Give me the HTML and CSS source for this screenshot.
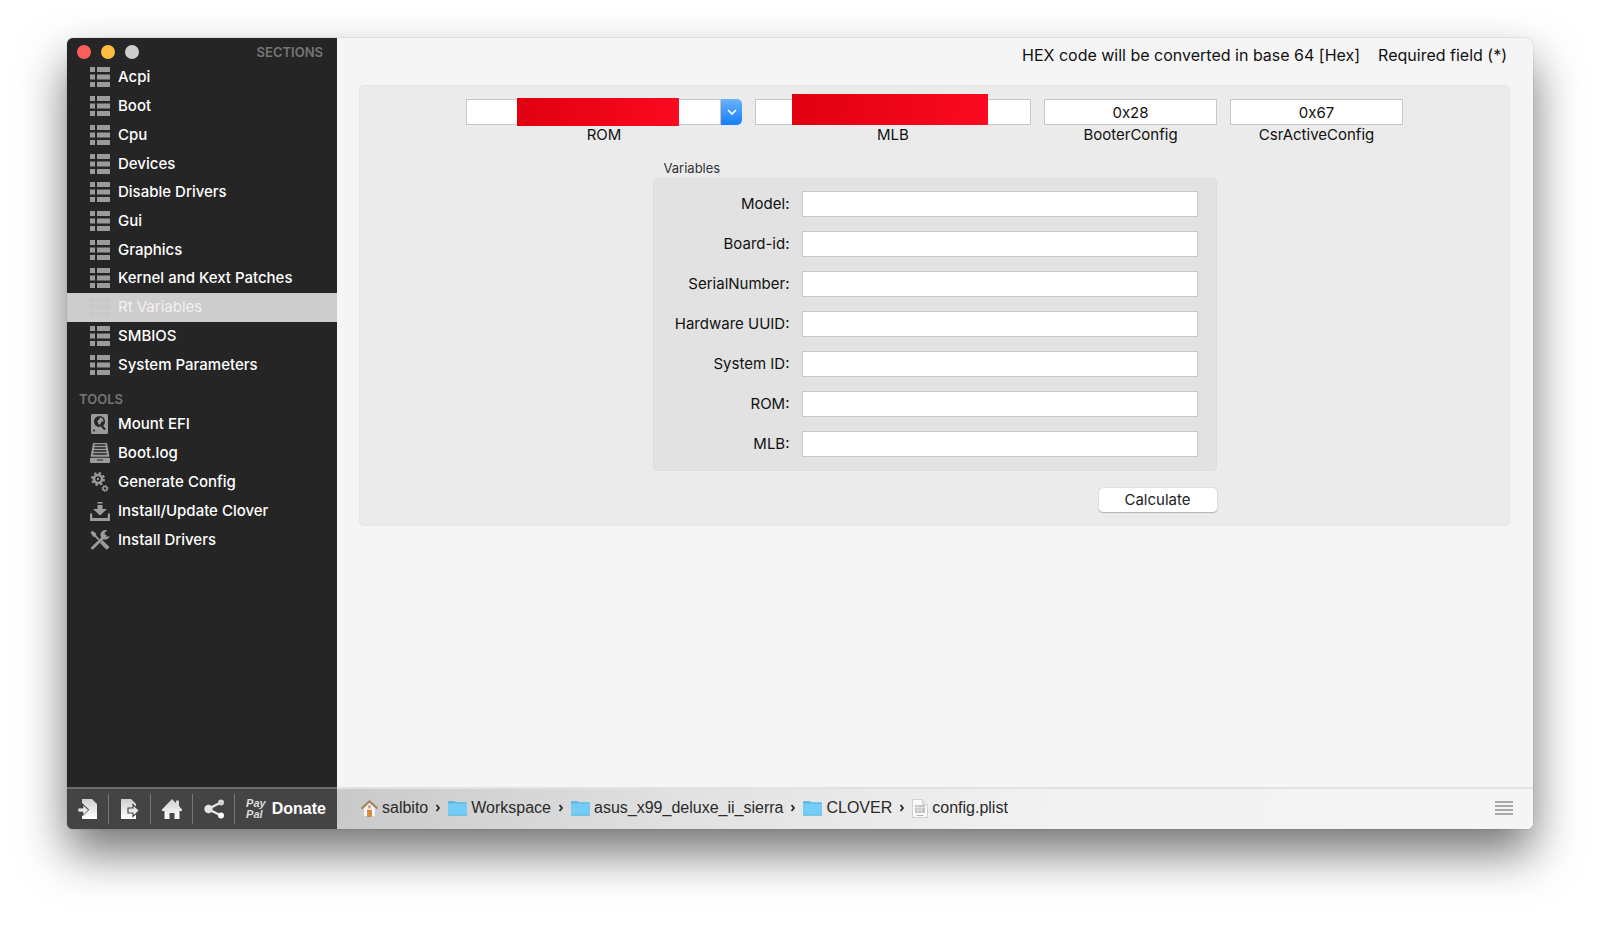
FILE: index.html
```
<!DOCTYPE html>
<html lang="en">
<head>
  <meta charset="UTF-8" />
  <meta name="viewport" content="width=device-width, initial-scale=1.0"/>
  <title>config.plist</title>
  <link rel="stylesheet" href="styles.css">
</head>
<body>

  <!-- Shared icons -->
  <svg class="sprite" aria-hidden="true">
    <symbol id="list" viewBox="0 0 20 20">
      <path d="M0 0h5v5H0zM7 0h13v5H7zM0 7.5h5v5H0zM7 7.5h13v5H7zM0 15h5v5H0zM7 15h13v5H7z"/>
    </symbol>
    <symbol id="folder" viewBox="0 0 20 16">
      <path d="M0 2Q0 .5 1.500 .5H6.500L8.500 2H19Q20 2 20 3V8H0z" fill="#5fb9e3"/>
      <path d="M0 3.500h20v11.500q0 .5-.5.5h-19q-.5 0-.5-.5z" fill="#74cdf6"/>
      <path d="M0 15.500h20" stroke="#58b2dc"/>
    </symbol>
    <symbol id="chevron" viewBox="0 0 6 8">
      <path d="M1.500 1l2.500 3-2.500 3" fill="none" stroke="#222" stroke-width="1.700"/>
    </symbol>
    <linearGradient id="silver" x1="0" y1="0" x2="0" y2="1">
      <stop offset="0" stop-color="#cfcfcf"/>
      <stop offset="1" stop-color="#fff"/>
    </linearGradient>
  </svg>

  <div class="window">

    <!-- Sidebar -->
    <aside class="sidebar">
      <header class="titlebar">
        <button class="light light--close" aria-label="Close"></button>
        <button class="light light--min" aria-label="Minimize"></button>
        <button class="light light--zoom" aria-label="Zoom"></button>
        <h2 class="heading heading--sections">SECTIONS</h2>
      </header>

      <nav class="menu menu--sections" aria-label="Sections">
        <a href="#acpi"><svg class="menu__icon"><use href="#list"/></svg>Acpi</a>
        <a href="#boot"><svg class="menu__icon"><use href="#list"/></svg>Boot</a>
        <a href="#cpu"><svg class="menu__icon"><use href="#list"/></svg>Cpu</a>
        <a href="#devices"><svg class="menu__icon"><use href="#list"/></svg>Devices</a>
        <a href="#drivers"><svg class="menu__icon"><use href="#list"/></svg>Disable Drivers</a>
        <a href="#gui"><svg class="menu__icon"><use href="#list"/></svg>Gui</a>
        <a href="#graphics"><svg class="menu__icon"><use href="#list"/></svg>Graphics</a>
        <a href="#kernel"><svg class="menu__icon"><use href="#list"/></svg>Kernel and Kext Patches</a>
        <a href="#rt" class="active"><svg class="menu__icon"><use href="#list"/></svg>Rt Variables</a>
        <a href="#smbios"><svg class="menu__icon"><use href="#list"/></svg>SMBIOS</a>
        <a href="#system"><svg class="menu__icon"><use href="#list"/></svg>System Parameters</a>
      </nav>

      <h2 class="heading heading--tools">TOOLS</h2>

      <nav class="menu menu--tools" aria-label="Tools">
        <a href="#mount">
          <svg class="menu__icon" viewBox="0 0 20 20">
            <rect x="1" width="17" height="20" rx="1.500"/>
            <circle cx="9.500" cy="7.500" r="5.500" fill="#252525"/>
            <path d="M9.500 7.500V3.500a4 4 0 0 1 4 4zM8 9.500l2-1 5.500 6.500-1.500 1.500z"/>
            <path d="M10 10l5 5.500" stroke="#252525" stroke-width="2"/>
            <circle cx="9.500" cy="7.500" r="2"/>
            <circle cx="4" cy="16.500" r="1" fill="#252525"/>
          </svg>Mount EFI</a>
        <a href="#log">
          <svg class="menu__icon" viewBox="0 0 20 20">
            <path d="M3 0h14l2.500 14H.5z"/>
            <path d="M4.500 2h11M4.200 5h11.600M3.700 8h12.600M3.200 11h13.600" stroke="#252525" stroke-width="1.500"/>
            <path d="M.3 14.200h19.400" stroke="#252525" stroke-width=".8"/>
            <rect y="14.700" width="20" height="5.300" rx="1"/>
            <path d="M7 17h6" stroke="#252525"/>
          </svg>Boot.log</a>
        <a href="#generate">
          <svg class="menu__icon" viewBox="0 0 20 20">
            <circle cx="8" cy="7" r="4" fill="none" stroke="#9b9b9b" stroke-width="2.500"/>
            <circle cx="8" cy="7" r="6" fill="none" stroke="#9b9b9b" stroke-width="2" stroke-dasharray="2.400 2.310"/>
            <circle cx="8" cy="7" r="1.200"/>
            <circle cx="15" cy="16.500" r="2" fill="none" stroke="#9b9b9b" stroke-width="1.500"/>
            <circle cx="15" cy="16.500" r="3" fill="none" stroke="#9b9b9b" stroke-dasharray="1.200 1.156"/>
          </svg>Generate Config</a>
        <a href="#install">
          <svg class="menu__icon" viewBox="0 0 20 20">
            <path d="M7.500 1h5v1.500h-5zM7.500 4h5v4H17l-7 6.500L3 8h4.500zM0 12.500h2.200V17h15.600v-4.500H20V20H0z"/>
          </svg>Install/Update Clover</a>
        <a href="#install-drivers">
          <svg class="menu__icon" viewBox="0 0 20 20">
            <path d="M.5 2.500L2.500.8l3.500 2.700.4 2.200L9.500 9 8.200 10.200 5 7 3 6.500zM10 13l2.500-2.800 5.800 5.500a2 2 0 0 1-2.800 3z"/>
            <path d="M2.500 18L15 5.800" stroke="#9b9b9b" stroke-width="3" stroke-linecap="round"/>
            <path d="M17.500.7a4.700 4.700 0 1 0 2.200 5.200l-3 .8-2.300-1.800.6-2.900z"/>
          </svg>Install Drivers</a>
      </nav>

      <footer class="toolbar">
        <button class="toolbar__button" aria-label="Import">
          <svg viewBox="0 0 20 20">
            <path d="M4 0h10l5 5v15H4v-3l7-6.500L4 4z" fill="url(#silver)"/>
            <path d="M0 9h5V5.500l5.500 5.500L5 16.500V13H0z" fill="url(#silver)" stroke="#444" stroke-width=".8"/>
          </svg>
        </button>
        <button class="toolbar__button" aria-label="Export">
          <svg viewBox="0 0 20 20">
            <path d="M1 0h10l5 5v15H1z" fill="url(#silver)"/>
            <path d="M8 9h5V5.500l6.500 6-6.500 6V14H8z" fill="url(#silver)" stroke="#444" stroke-width="1.200"/>
          </svg>
        </button>
        <button class="toolbar__button" aria-label="Home">
          <svg viewBox="0 0 20 20">
            <path d="M10 0l4 4V1.500h3V7l3 3.500V12h-2.500v8h-5v-6h-5v6h-5v-8H0v-1.500z" fill="url(#silver)"/>
          </svg>
        </button>
        <button class="toolbar__button" aria-label="Share">
          <svg viewBox="0 0 20 20">
            <path d="M17 3.500L4 10l13 6.500" fill="none" stroke="#e4e4e4" stroke-width="2.500"/>
            <circle cx="4.500" cy="10" r="4.200" fill="#e4e4e4"/>
            <circle cx="17" cy="3.500" r="3" fill="#d4d4d4"/>
            <circle cx="17" cy="16.500" r="3" fill="#fff"/>
          </svg>
        </button>
        <button class="toolbar__donate">
          <span class="paypal">Pay<br>Pal</span>
          <span>Donate</span>
        </button>
      </footer>
    </aside>

    <!-- Main Content -->
    <main class="main">
      <div class="notes">
        <span>HEX code will be converted in base 64 [Hex]</span>
        <span>Required field (*)</span>
      </div>

      <form class="panel">
        <div class="settings">
          <div class="setting setting--wide">
            <div class="combo">
              <input type="text" id="rom" class="field">
              <button type="button" class="combo__button" aria-label="Show values">
                <svg viewBox="0 0 10 6"><path d="M1 1l4 4 4-4" fill="none" stroke="#fff" stroke-width="1.600"/></svg>
              </button>
              <span class="redacted redacted--rom"></span>
            </div>
            <label for="rom">ROM</label>
          </div>
          <div class="setting setting--wide">
            <div class="combo">
              <input type="text" id="mlb" class="field">
              <span class="redacted redacted--mlb"></span>
            </div>
            <label for="mlb">MLB</label>
          </div>
          <div class="setting">
            <input type="text" id="booter" class="field" value="0x28">
            <label for="booter">BooterConfig</label>
          </div>
          <div class="setting">
            <input type="text" id="csr" class="field" value="0x67">
            <label for="csr">CsrActiveConfig</label>
          </div>
        </div>

        <div class="variables">
          <h3 class="variables__title">Variables</h3>
          <div class="variables__box">
            <label for="v-model">Model:</label>
            <input type="text" id="v-model" class="field">
            <label for="v-board">Board-id:</label>
            <input type="text" id="v-board" class="field">
            <label for="v-serial">SerialNumber:</label>
            <input type="text" id="v-serial" class="field">
            <label for="v-uuid">Hardware UUID:</label>
            <input type="text" id="v-uuid" class="field">
            <label for="v-system">System ID:</label>
            <input type="text" id="v-system" class="field">
            <label for="v-rom">ROM:</label>
            <input type="text" id="v-rom" class="field">
            <label for="v-mlb">MLB:</label>
            <input type="text" id="v-mlb" class="field">
          </div>
          <button type="button" class="calculate">Calculate</button>
        </div>
      </form>

      <footer class="pathbar">
        <nav class="path" aria-label="File path">
          <a href="#salbito">
            <svg class="path__home" viewBox="0 0 16 16">
              <path d="M2.500 7.500L8 2.500l5.500 5V15.500h-11z" fill="#f7f7f7" stroke="#bbb" stroke-width=".5"/>
              <path d="M.5 8L8 1.200 15.500 8" fill="none" stroke="#a77c55" stroke-width="1.700"/>
              <rect x="6.500" y="5" width="3" height="3" fill="#c9a798"/>
              <rect x="6.200" y="9.500" width="3.600" height="6" fill="#e8862d" stroke="#a9683a" stroke-width=".5"/>
            </svg>salbito</a>
          <svg class="path__chevron"><use href="#chevron"/></svg>
          <a href="#workspace"><svg class="path__folder"><use href="#folder"/></svg>Workspace</a>
          <svg class="path__chevron"><use href="#chevron"/></svg>
          <a href="#asus"><svg class="path__folder"><use href="#folder"/></svg>asus_x99_deluxe_ii_sierra</a>
          <svg class="path__chevron"><use href="#chevron"/></svg>
          <a href="#clover"><svg class="path__folder"><use href="#folder"/></svg>CLOVER</a>
          <svg class="path__chevron"><use href="#chevron"/></svg>
          <a href="#config">
            <svg class="path__file" viewBox="0 0 16 19">
              <path d="M.5.5h10l5 5v13H.5z" fill="#fafafa" stroke="#d0d0d0"/>
              <path d="M10.500.5v5h5" fill="#e8e8e8" stroke="#d0d0d0"/>
              <rect x="3" y="6" width="10" height="8" fill="#c4c4c4"/>
              <path d="M3 8.500h10M3 11h6M6 6v8M9.500 8v6" stroke="#eee" stroke-width=".7"/>
              <path d="M4.500 16.500h7" stroke="#b5b5b5"/>
            </svg>config.plist</a>
        </nav>
        <button class="pathbar__menu" aria-label="Menu">
          <svg viewBox="0 0 18 14"><path d="M0 1h18M0 5h18M0 9h18M0 13h18" stroke="#8e8e8e" stroke-width="1.300"/></svg>
        </button>
      </footer>
    </main>
  </div>

</body>
</html>
```
FILE: styles.css
```
* {
  margin: 0;
  padding: 0;
  box-sizing: border-box;
}

body {
  min-height: 100vh;
  display: flex;
  padding: 38px 67px 96px;
  background: #fff;
  color: #111;
  font-family: Inter, Roboto, sans-serif;
  font-size: 15px;
  line-height: 20px;
}

a {
  color: inherit;
  text-decoration: none;
}

button {
  border: none;
  background: none;
  font: inherit;
  color: inherit;
}

.sprite {
  position: absolute;
  width: 0;
  height: 0;
}

.window {
  flex: 1;
  display: flex;
  border-radius: 6px;
  overflow: hidden;
  box-shadow: 0 0 1px rgba(0, 0, 0, 0.5), 0 24px 48px rgba(0, 0, 0, 0.55);
}

/* Sidebar */
.sidebar {
  flex: 0 0 270px;
  display: flex;
  flex-direction: column;
  background: #252525;
  color: #fff;
}

.titlebar {
  display: flex;
  align-items: center;
  gap: 10px;
  height: 25px;
  padding: 2px 14px 0 10px;
}

.light {
  width: 14px;
  height: 14px;
  border-radius: 50%;
}

.light--close { background: #fc605b; }
.light--min { background: #fdbc40; }
.light--zoom { background: #cdcdcd; }

.heading {
  color: #757575;
  font-size: 13px;
  font-weight: 600;
}

.heading--sections {
  margin-left: auto;
}

.heading--tools {
  padding: 10px 12px 1px;
}

.menu {
  display: grid;
  grid-auto-rows: 1fr;
  font-weight: 500;
}

.menu--sections { min-height: 316px; }
.menu--tools { min-height: 144px; }

.menu a {
  display: flex;
  align-items: center;
  gap: 8px;
  padding-left: 23px;
}

.menu__icon {
  width: 20px;
  height: 20px;
  fill: #9b9b9b;
}

.menu .active {
  background: #cdcdcd;
  color: #f4eff4;
  font-weight: 400;
}

.active .menu__icon {
  fill: #c9c9c9;
}

.toolbar {
  display: flex;
  align-items: center;
  height: 42px;
  margin-top: auto;
  border-top: 2px solid #6c6c6c;
  background: #444;
}

.toolbar__button {
  width: 42px;
  height: 30px;
  border-right: 1px solid #777;
  display: flex;
  align-items: center;
  justify-content: center;
}

.toolbar__button svg {
  width: 20px;
  height: 20px;
}

.toolbar__donate {
  flex: 1;
  display: flex;
  align-items: center;
  justify-content: center;
  gap: 6px;
  font-family: "Liberation Sans", Arial, sans-serif;
  font-size: 16px;
  font-weight: 700;
}

.paypal {
  color: #ddd;
  font-size: 11px;
  font-style: italic;
  line-height: 11px;
  text-align: left;
}

/* Main area */
.main {
  flex: 1;
  min-width: 0;
  display: flex;
  flex-direction: column;
  background: #f5f5f5;
}

.notes {
  display: flex;
  justify-content: flex-end;
  gap: 18px;
  padding: 7px 26px 20px;
  font-size: 16px;
}

.panel {
  display: flex;
  flex-direction: column;
  align-items: center;
  margin: 0 23px 0 22px;
  padding: 13px 0;
  border: 1px solid #e4e4e4;
  border-radius: 5px;
  background: #ebebeb;
}

.field {
  width: 100%;
  height: 26px;
  border: 1px solid #c8c8c8;
  background: #fff;
  color: #111;
  font: inherit;
  text-align: center;
}

.settings {
  display: flex;
  gap: 13px;
}

.setting {
  width: 173px;
  display: flex;
  flex-direction: column;
  text-align: center;
}

.setting--wide {
  width: 276px;
}

.combo {
  position: relative;
  display: flex;
}

.combo__button {
  flex: 0 0 21px;
  display: flex;
  align-items: center;
  justify-content: center;
  border-radius: 0 5px 5px 0;
  background: linear-gradient(#6bb3fa, #157efb);
}

.combo__button svg {
  width: 10px;
  height: 6px;
}

/* Blocks that cover private values */
.redacted {
  position: absolute;
  background: linear-gradient(100deg, #e0000f, #fb0a20);
}

.redacted--rom {
  top: -1px;
  left: 51px;
  width: 162px;
  height: 28px;
}

.redacted--mlb {
  top: -5px;
  left: 37px;
  width: 196px;
  height: 31px;
}

.variables {
  display: flex;
  flex-direction: column;
  width: 564px;
  margin-top: 13px;
}

.variables__title {
  padding-left: 11px;
  color: #333;
  font-size: 13px;
  font-weight: 400;
}

.variables__box {
  display: grid;
  grid-template-columns: 1fr 396px;
  align-items: center;
  gap: 14px 12px;
  padding: 12px 18px 13px 0;
  border: 1px solid #dedede;
  border-radius: 4px;
  background: #e2e2e2;
  text-align: right;
}

.calculate {
  align-self: flex-end;
  width: 118px;
  height: 24px;
  margin-top: 17px;
  border-radius: 4px;
  background: #fff;
  box-shadow: 0 0 1px rgba(0, 0, 0, 0.4), 0 1px 1px rgba(0, 0, 0, 0.2);
  color: #222;
}

/* Path bar */
.pathbar {
  display: flex;
  align-items: center;
  justify-content: space-between;
  height: 42px;
  margin-top: auto;
  padding: 0 20px 2px 24px;
  border-top: 2px solid #e2e2e2;
  background: linear-gradient(100deg, #c9c9c9, #e2e2e2 30%, #f2f2f2 60%, #f5f5f5);
  color: #2a2a2a;
  font-family: "Liberation Sans", Arial, sans-serif;
  font-size: 16px;
}

.path,
.path a {
  display: flex;
  align-items: center;
}

.path {
  gap: 7px;
}

.path a {
  gap: 4px;
}

.path__home {
  width: 17px;
  height: 17px;
}

.path__folder {
  width: 19px;
  height: 16px;
}

.path__file {
  width: 16px;
  height: 19px;
}

.path__chevron {
  width: 6px;
  height: 8px;
}

.pathbar__menu svg {
  display: block;
  width: 18px;
  height: 14px;
}
```
